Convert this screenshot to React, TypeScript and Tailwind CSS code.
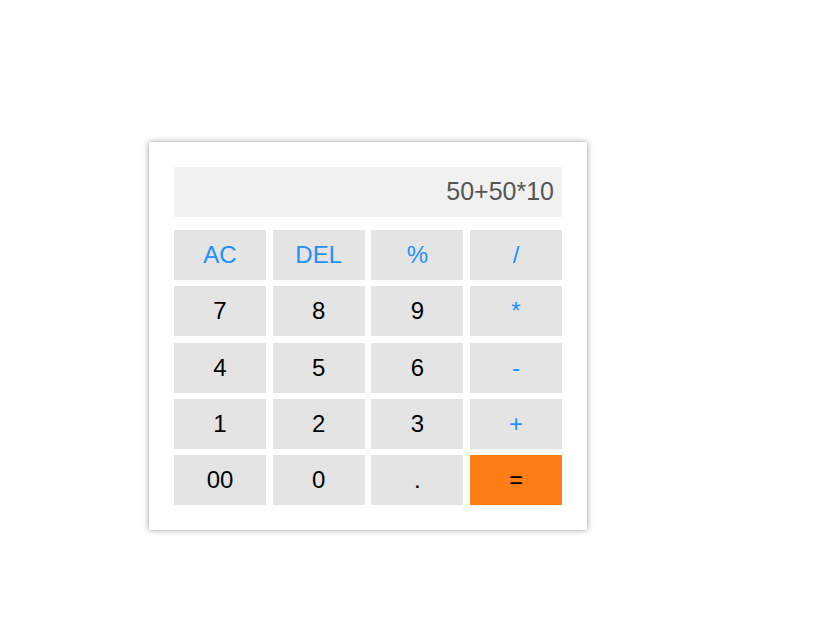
import React from 'react';

type Key = { label: string; kind: 'op' | 'num' | 'eq' };

const keys: Key[] = [
    { label: 'AC', kind: 'op' },
    { label: 'DEL', kind: 'op' },
    { label: '%', kind: 'op' },
    { label: '/', kind: 'op' },
    { label: '7', kind: 'num' },
    { label: '8', kind: 'num' },
    { label: '9', kind: 'num' },
    { label: '*', kind: 'op' },
    { label: '4', kind: 'num' },
    { label: '5', kind: 'num' },
    { label: '6', kind: 'num' },
    { label: '-', kind: 'op' },
    { label: '1', kind: 'num' },
    { label: '2', kind: 'num' },
    { label: '3', kind: 'num' },
    { label: '+', kind: 'op' },
    { label: '00', kind: 'num' },
    { label: '0', kind: 'num' },
    { label: '.', kind: 'num' },
    { label: '=', kind: 'eq' },
];

export default function App() {
    return (
        <div className="min-h-[621px] bg-white font-['Liberation_Sans',Arial,sans-serif]">
            <div className="pt-[142px] pl-[149px]">
                {/* Calculator card */}
                <div className="w-[438px] bg-white p-[25px] shadow-[0_0_6px_rgba(0,0,0,0.4)]">
                    <div className="h-[50px] bg-[#f1f1f1] flex items-center justify-end pr-[8px] text-[25px] text-[#555]">
                        50+50*10
                    </div>
                    <div className="mt-[13px] grid grid-cols-4 gap-x-[6.67px] gap-y-[6.25px]">
                        {keys.map((k) => (
                            <button
                                key={k.label}
                                className={`h-[50px] flex items-center justify-center text-[24px] ${
                                    k.kind === 'eq'
                                        ? 'bg-[#fb7d14] text-black'
                                        : k.kind === 'op'
                                        ? 'bg-[#e4e4e4] text-[#1e90ff]'
                                        : 'bg-[#e4e4e4] text-black'
                                }`}
                            >
                                {k.label}
                            </button>
                        ))}
                    </div>
                </div>
            </div>
        </div>
    );
}
